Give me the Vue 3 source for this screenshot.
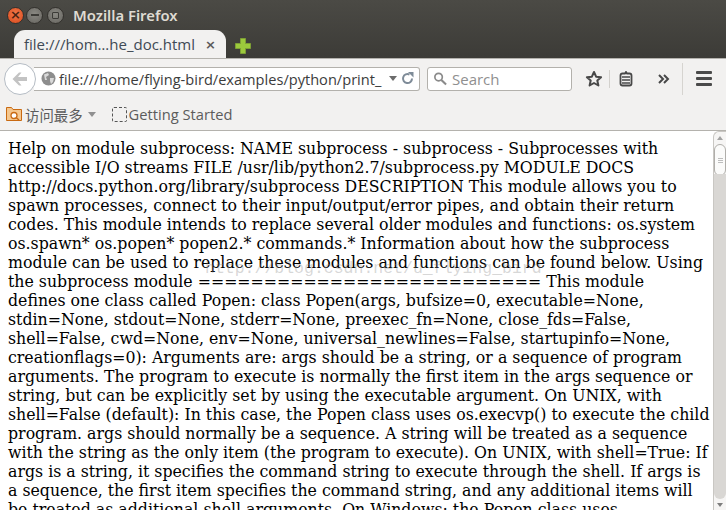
<script setup>
const lines = [
  'Help on module subprocess: NAME subprocess - subprocess - Subprocesses with',
  'accessible I/O streams FILE /usr/lib/python2.7/subprocess.py MODULE DOCS',
  'http://docs.python.org/library/subprocess DESCRIPTION This module allows you to',
  'spawn processes, connect to their input/output/error pipes, and obtain their return',
  'codes. This module intends to replace several older modules and functions: os.system',
  'os.spawn* os.popen* popen2.* commands.* Information about how the subprocess',
  'module can be used to replace these modules and functions can be found below. Using',
  'the subprocess module ========================== This module',
  'defines one class called Popen: class Popen(args, bufsize=0, executable=None,',
  'stdin=None, stdout=None, stderr=None, preexec_fn=None, close_fds=False,',
  'shell=False, cwd=None, env=None, universal_newlines=False, startupinfo=None,',
  'creationflags=0): Arguments are: args should be a string, or a sequence of program',
  'arguments. The program to execute is normally the first item in the args sequence or',
  'string, but can be explicitly set by using the executable argument. On UNIX, with',
  'shell=False (default): In this case, the Popen class uses os.execvp() to execute the child',
  'program. args should normally be a sequence. A string will be treated as a sequence',
  'with the string as the only item (the program to execute). On UNIX, with shell=True: If',
  'args is a string, it specifies the command string to execute through the shell. If args is',
  'a sequence, the first item specifies the command string, and any additional items will',
  'be treated as additional shell arguments. On Windows: the Popen class uses'
]
</script>

<template>
  <div class="win">
    <header class="top">
      <div class="title">
        <span class="btn close">×</span>
        <span class="btn min"><i class="dash"></i></span>
        <span class="btn max"><i class="sq"></i></span>
        <span class="wintitle">Mozilla Firefox</span>
      </div>
      <div class="tabs">
        <div class="tab">
          <span class="tabtext">file:///hom…he_doc.html</span>
          <span class="tabx">×</span>
        </div>
        <svg class="plus" width="18" height="18" viewBox="0 0 18 18">
          <path d="M6.500 1.500h5v5h5v5h-5v5h-5v-5h-5v-5h5z" fill="#9cc93c" stroke="#7d9f35" stroke-width="1" />
        </svg>
      </div>
    </header>

    <nav class="nav">
      <div class="back">
        <svg width="18" height="16" viewBox="0 0 18 16">
          <path d="M8 1.500 1.500 8 8 14.500h2.500L7 10h9V6H7l3.500-4.500z" fill="#c3c3c3" />
        </svg>
      </div>
      <div class="url">
        <svg class="globe" width="15" height="15" viewBox="0 0 15 15">
          <circle cx="7.500" cy="7.500" r="7" fill="#8d8d8d" />
          <path d="M3 3.500 7 2l1 2-3 2 1 3-2 0zM9 7l4 0-1 4-2 2-1-3z" fill="#d9d9d9" />
        </svg>
        <span class="urltext">file:///home/flying-bird/examples/python/print_</span>
        <i class="caret"></i>
        <svg class="reload" width="13" height="13" viewBox="0 0 13 13">
          <path d="M11 6.500A4.500 4.500 0 1 1 8.500 2.500" fill="none" stroke="#7e8b98" stroke-width="2" />
          <path d="M7 0h5.500v5.500z" fill="#7e8b98" />
        </svg>
      </div>
      <div class="search">
        <svg width="14" height="15" viewBox="0 0 15 15">
          <circle cx="6" cy="6" r="4" fill="none" stroke="#8a8a8a" stroke-width="1.800" />
          <path d="M9 9l5 5" stroke="#8a8a8a" stroke-width="2.200" />
        </svg>
        <span>Search</span>
      </div>
      <svg class="star" width="18" height="18" viewBox="0 0 18 18">
        <path d="M9 2l2.100 4.700 5 .5-3.800 3.300 1.100 5L9 13l-4.400 2.500 1.100-5L1.900 7.200l5-.5z" fill="none" stroke="#484848" stroke-width="2" stroke-linejoin="round" />
      </svg>
      <i class="vsep"></i>
      <svg class="clip" width="16" height="16" viewBox="0 0 16 16">
        <path d="M5 2.500h2L8 1l1 1.500h2.500q2 0 2 2v8q0 2-2 2h-7q-2 0-2-2v-8q0-2 2-2z" fill="none" stroke="#484848" stroke-width="1.800" />
        <path d="M4 6h8M4 9h8M4 12h8" stroke="#484848" stroke-width="1.300" />
      </svg>
      <svg class="more" width="12" height="10" viewBox="0 0 12 10">
        <path d="M1 1l4 4-4 4M6 1l4 4-4 4" fill="none" stroke="#484848" stroke-width="2" />
      </svg>
      <i class="vsep tall"></i>
      <div class="burger"><i></i><i></i><i></i></div>
    </nav>

    <div class="marks">
      <svg class="folder" width="16" height="16" viewBox="0 0 16 16">
        <path d="M.5 1.500h5l1.500 2h8.500v11H.5z" fill="#f5c78e" stroke="#c96a12" />
        <circle cx="8" cy="9.500" r="3" fill="#fff" stroke="#c96a12" stroke-width="1.300" />
        <path d="M10 11.500l3 2.500" stroke="#c96a12" stroke-width="1.500" />
      </svg>
      <span class="mlabel cjk">访问最多</span>
      <i class="caret mc"></i>
      <i class="dashbox"></i>
      <span class="mlabel">Getting Started</span>
    </div>

    <main class="page">
      <div class="doc">
        <div v-for="(l, i) in lines" :key="i" class="line">{{ l }}</div>
      </div>
      <div class="water">http://blog.csdn.net/u_flying_bird</div>
      <aside class="scroll">
        <i class="arrow up"></i>
        <div class="thumb"><b></b><b></b><b></b></div>
        <div class="rest"></div>
        <i class="arrow down"></i>
      </aside>
    </main>
  </div>
</template>

<style>
html, body { margin: 0; overflow: hidden; }
</style>

<style scoped>
.win { width: 726px; height: 510px; display: flex; flex-direction: column; overflow: hidden; background: #f2f1f0; font-family: "Open Sans", "Noto Sans", sans-serif; }
.top { background: linear-gradient(#4b4a45, #3c3b37); height: 58px; box-sizing: border-box; display: flex; flex-direction: column; flex: none; }
.title { height: 30px; display: flex; align-items: center; padding: 0 0 0 7px; gap: 2px; }
.btn { width: 17px; height: 17px; box-sizing: border-box; border-radius: 50%; display: flex; align-items: center; justify-content: center; font: bold 13px/16px "DejaVu Sans", sans-serif; }
.close { background: radial-gradient(circle at 50% 40%, #f27a4a, #d9481c); color: #4a2312; border: 1px solid #33312d; }
.min, .max { background: radial-gradient(circle at 50% 40%, #8a8983, #66645f); border: 1px solid #33312d; }
.max { margin-left: 2px; }
.dash { width: 8px; height: 2px; background: #3c3b37; }
.sq { width: 7px; height: 7px; box-sizing: border-box; border: 1.500px solid #3c3b37; border-radius: 1px; }
.wintitle { margin-left: 7px; color: #dfdbd2; font-weight: 600; font-size: 14.800px; font-family: "Noto Sans", sans-serif; white-space: nowrap; }
.tabs { height: 28px; display: flex; align-items: flex-end; padding-left: 14px; }
.tab { width: 212px; height: 28px; box-sizing: border-box; background: #f2f1f0; border-radius: 11px 11px 0 0; display: flex; align-items: center; padding: 0 10px; gap: 10px; }
.tabtext { color: #404a55; font-size: 15px; white-space: nowrap; }
.tabx { color: #5a5a5a; font: bold 13px "DejaVu Sans", sans-serif; }
.plus { margin: 0 0 3px 8px; }
.nav { height: 40px; box-sizing: border-box; display: flex; align-items: center; padding: 0 0 0 4px; border-top: 1px solid #b4b2ad; flex: none; }
.back { width: 32px; height: 32px; box-sizing: border-box; border-radius: 50%; background: #fff; border: 1px solid #b5bcc4; display: flex; align-items: center; justify-content: center; z-index: 1; flex: none; }
.url { width: 386px; height: 24px; margin-left: -2px; box-sizing: border-box; background: #fff; border: 1px solid #b3b1ac; border-left: 0; border-radius: 0 3px 3px 0; display: flex; align-items: center; padding-left: 7px; flex: none; }
.globe { flex: none; }
.urltext { margin-left: 3px; width: 331px; color: #3c3c3c; font-size: 14.600px; white-space: nowrap; overflow: hidden; flex: none; }
.caret { width: 0; height: 0; border: 4px solid transparent; border-top: 5px solid #6c6c6c; border-bottom: 0; flex: none; }
.url .caret { margin-left: -1px; }
.reload { margin-left: 4px; flex: none; }
.search { width: 145px; height: 24px; margin-left: 7px; box-sizing: border-box; background: #fff; border: 1px solid #b3b1ac; border-radius: 3px; display: flex; align-items: center; gap: 5px; padding-left: 5px; color: #8f8f8f; font-size: 15px; flex: none; }
.star { margin-left: 13px; flex: none; }
.vsep { width: 1px; height: 18px; background: #d3d1cd; margin-left: 6px; flex: none; }
.clip { margin-left: 8px; flex: none; }
.more { margin-left: 24px; flex: none; }
.vsep.tall { height: 32px; margin-left: 12px; background: #d6d4d0; }
.burger { margin-left: 13px; width: 16px; display: flex; flex-direction: column; gap: 3px; }
.burger i { height: 3px; background: #4a4a4a; border-radius: 1px; }
.marks { height: 33px; box-sizing: border-box; display: flex; align-items: center; padding-left: 6px; border-bottom: 1px solid #b4b2ad; flex: none; }
.mlabel { color: #5c5c5c; font-size: 14.700px; white-space: nowrap; }
.cjk { font-family: "Noto Sans CJK SC", sans-serif; margin-left: 3px; font-size: 14.400px; }
.mc { margin-left: 5px; border-top-color: #909090; }
.dashbox { width: 13px; height: 13px; border: 1px dashed #555; border-radius: 2px; margin: 0 2px 0 16px; flex: none; }
.page { flex: 1; position: relative; background: #fff; overflow: hidden; }
.doc { padding: 8px 0 0 8px; font: 15.770px/19px "DejaVu Serif", serif; color: #000; }
.line { white-space: nowrap; }
.water { position: absolute; left: 205px; top: 128px; font: 16.500px "Liberation Mono", monospace; color: rgba(140,140,140,.35); white-space: nowrap; }
.scroll { position: absolute; right: 0; top: 0; bottom: 0; width: 13px; background: #f6f5f4; border-left: 1px solid #c9c7c3; border-top: 1px solid #c9c7c3; border-radius: 6px 0 0 0; box-sizing: border-box; display: flex; flex-direction: column; align-items: center; }
.arrow { width: 0; height: 0; border: 3px solid transparent; flex: none; }
.up { border-bottom: 4px solid #a3a3a3; border-top: 0; margin: 4px 0 4px; }
.down { border-top: 4px solid #7d7d7d; border-bottom: 0; margin: 4px 0 3px; }
.thumb { width: 12px; height: 32px; background: #fbfbfa; border: 1px solid #b0aeaa; border-radius: 6px; box-sizing: border-box; display: flex; flex-direction: column; align-items: center; justify-content: center; gap: 1px; flex: none; }
.thumb b { width: 5px; height: 1px; background: #bdbdbd; }
.rest { flex: 1; width: 12px; background: #d9d7d4; border-radius: 0 0 6px 6px; margin-top: -2px; }
</style>
